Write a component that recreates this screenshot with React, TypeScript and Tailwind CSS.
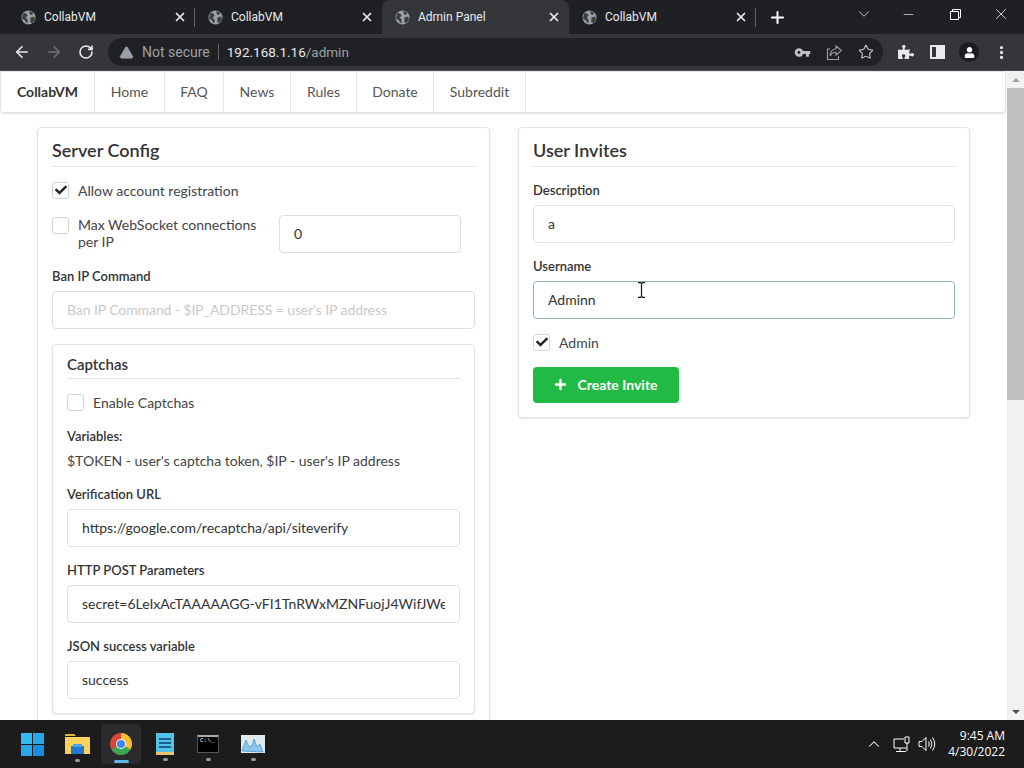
import React from 'react';
import { ArrowLeft, ArrowRight, RotateCw, Star, X, Plus, ChevronDown, ChevronUp, Minus, TriangleAlert, MoreVertical } from 'lucide-react';
import { FaCheck, FaPuzzlePiece, FaUser, FaPlus } from 'react-icons/fa';
import { MdVpnKey } from 'react-icons/md';

const Globe = () => (
  <svg width="15" height="15" viewBox="0 0 16 16" className="shrink-0">
    <circle cx="8" cy="8" r="7.5" fill="#9aa0a6" />
    <path d="M3 3l3 1 1 2-2 2 2 2v3l-1 1-2-3-3-2 1-4zM9 1l4 2-1 2-2 0-1-2zM10 8l4-1 1 3-3 4-2-1z" fill="#3c4043" />
  </svg>
);

const Tab = ({ title, active, sep }: { title: string; active?: boolean; sep?: boolean }) => (
  <div className={`relative flex items-center w-[187px] h-[34px] pl-[13px] pr-[8px] text-[12px] text-[#e8eaed] ${active ? 'bg-[#35363a] rounded-t-lg' : ''}`}>
    <Globe />
    <span className="ml-[8px] flex-1">{title}</span>
    <X size={14} strokeWidth={3} className="text-[#e8eaed]" />
    {sep && <div className="absolute right-0 top-[8px] h-[19px] w-px bg-[#5f6368]" />}
  </div>
);

const Check = ({ on, className }: { on?: boolean; className?: string }) => (
  <div className={`w-[17px] h-[17px] shrink-0 rounded-[3px] border border-[#d4d4d5] bg-white flex items-center justify-center ${className ?? ''}`}>
    {on && <FaCheck size={12} className="text-[#222]" />}
  </div>
);

const Field = ({ label, value, mb }: { label: string; value: string; mb?: string }) => (
  <div className={mb}>
    <div className="text-[13px] font-semibold text-[#333] h-[19px] leading-[19px] mb-[5px]">{label}</div>
    <div className="h-[38px] border border-[#dededf] rounded-[4px] px-[14px] pb-[2px] flex items-center text-[14px] text-[#333]">
      <div className="overflow-hidden whitespace-nowrap">{value}</div>
    </div>
  </div>
);

const navItems = [
  { t: 'Home', w: 'w-[70px]' },
  { t: 'FAQ', w: 'w-[59px]' },
  { t: 'News', w: 'w-[67px]' },
  { t: 'Rules', w: 'w-[66px]' },
  { t: 'Donate', w: 'w-[77px]' },
  { t: 'Subreddit', w: 'w-[92px]' },
];

const App: React.FC = () => {
  return (
    <div className="w-[1024px] h-[768px] flex flex-col overflow-hidden bg-white font-['Lato',sans-serif]">
      {/* chrome tabs */}
      <div className="h-[34px] bg-[#1f2024] flex items-center pl-[8px] font-['Roboto',sans-serif] shrink-0">
        <Tab title="CollabVM" sep />
        <Tab title="CollabVM" />
        <Tab title="Admin Panel" active />
        <Tab title="CollabVM" sep />
        <Plus size={19} strokeWidth={2.5} className="text-white ml-[12px]" />
        <div className="flex-1" />
        <ChevronDown size={18} strokeWidth={1.2} className="text-[#d5d5d5] mr-[28px] -mt-[6px]" />
        <Minus size={15} strokeWidth={1} className="text-white mr-[34px] -mt-[6px]" />
        <svg width="11" height="11" viewBox="0 0 11 11" fill="none" stroke="#fff" strokeWidth="1" className="mr-[31px] -mt-[6px]">
          <path d="M.5 2.5h8v8h-8zM2.5 2.5v-2h8v8h-2" />
        </svg>
        <X size={18} strokeWidth={1} className="text-white mr-[14px] -mt-[6px]" />
      </div>

      {/* chrome toolbar */}
      <div className="h-[37px] bg-[#35363a] border-b border-[#4a4b4f] flex items-center pl-[13px] pr-0 shrink-0 font-['Roboto',sans-serif]">
        <ArrowLeft size={18} strokeWidth={2.2} className="text-[#e8eaed]" />
        <ArrowRight size={18} strokeWidth={2.2} className="text-[#6f7276] ml-[14px]" />
        <RotateCw size={16} strokeWidth={2.4} className="text-[#e8eaed] ml-[15px]" />
        <div className="ml-[14px] w-[775px] h-[28px] rounded-full bg-[#202124] flex items-center pl-[11px] text-[14px]">
          <TriangleAlert size={15} fill="#9aa0a6" strokeWidth={1} className="text-[#9aa0a6]" />
          <span className="text-[#9aa0a6] ml-[8px]">Not secure</span>
          <span className="w-px h-[16px] bg-[#5f6368] mx-[8px]" />
          <span className="text-[#e8eaed] text-[13.500px]">192.168.1.16</span>
          <span className="text-[#9aa0a6] text-[13.500px]">/admin</span>
          <div className="flex-1" />
          <MdVpnKey size={17} className="text-[#bdc1c6] mr-[15px]" />
          <svg width="17" height="17" viewBox="0 0 17 17" fill="none" stroke="#9aa0a6" strokeWidth="1.1" className="mr-[15px]">
            <path d="M4 5H1.5v10.5h11V12" />
            <path d="M10 2l5.5 4.5L10 11V8.3C7.5 8.3 5.5 9.5 4 12c.3-4 2.5-7 6-7.300z" />
          </svg>
          <Star size={16} strokeWidth={1.6} className="text-[#c8cbd0] mr-[9px]" />
        </div>
        <FaPuzzlePiece size={16} className="text-[#e8eaed] ml-[15px]" />
        <div className="ml-[16px] w-[15px] h-[14px] border-2 border-[#e8eaed] flex justify-end">
          <div className="w-[7px] bg-[#e8eaed]" />
        </div>
        <div className="ml-[14px] w-[20px] h-[20px] rounded-full bg-[#1b1c1f] flex items-center justify-center">
          <FaUser size={11} className="text-white" />
        </div>
        <MoreVertical size={17} strokeWidth={2.6} className="text-[#e8eaed] ml-[14px]" />
      </div>

      {/* page */}
      <div className="flex-1 flex min-h-0">
        <div className="relative flex-1 min-w-0 overflow-hidden">
          <div className="h-[42px] border border-[#e3e3e4] rounded-b-[4px] shadow-[0_1px_2px_rgba(34,36,38,0.15)] flex text-[14px] text-[#555] w-[1006px]">
            <div className="w-[94px] pb-[2px] flex items-center justify-center border-r border-[#e8e8e9] font-bold text-[#333]">CollabVM</div>
            {navItems.map((n) => (
              <div key={n.t} className={`${n.w} pb-[2px] flex items-center justify-center border-r border-[#e8e8e9]`}>{n.t}</div>
            ))}
          </div>

          <div className="flex items-start pl-[37px] pt-[14px] gap-[28px]">
            {/* server config */}
            <div className="w-[453px] border border-[#e3e3e4] rounded-[4px] shadow-[0_1px_2px_rgba(34,36,38,0.12)] px-[14px] pt-[11px] pb-[20px] shrink-0">
              <div className="text-[18px] font-semibold text-[#333] h-[28px] leading-[22px] border-b border-[#e3e3e4]">Server Config</div>
              <div className="flex items-center gap-[9px] mt-[14px] text-[14px] text-[#444] h-[18px]">
                <Check on />
                <span>Allow account registration</span>
              </div>
              <div className="flex mt-[16px] h-[38px]">
                <Check className="mt-[2px]" />
                <div className="ml-[9px] w-[201px] text-[14px] leading-[17px] text-[#444] mt-[1px]">Max WebSocket connections per IP</div>
                <div className="w-[182px] h-[38px] border border-[#dededf] rounded-[4px] px-[14px] pb-[2px] flex items-center text-[14px] text-[#333]">0</div>
              </div>
              <div className="mt-[14px]">
                <div className="text-[13px] font-semibold text-[#333] h-[19px] leading-[19px] mb-[5px]">Ban IP Command</div>
                <div className="h-[38px] border border-[#dededf] rounded-[4px] px-[14px] pb-[2px] flex items-center text-[14px] tracking-[-0.09px] text-[#c9c9c9]">Ban IP Command - $IP_ADDRESS = user's IP address</div>
              </div>

              {/* captchas */}
              <div className="mt-[15px] border border-[#e3e3e4] rounded-[4px] shadow-[0_1px_2px_rgba(34,36,38,0.12)] px-[14px] pt-[9px] pb-[14px]">
                <div className="text-[15px] font-semibold text-[#333] h-[25px] leading-[20px] border-b border-[#e3e3e4]">Captchas</div>
                <div className="flex items-center gap-[9px] mt-[14px] text-[14px] text-[#444] h-[18px]">
                  <Check />
                  <span>Enable Captchas</span>
                </div>
                <div className="text-[13px] font-semibold text-[#333] mt-[16px] h-[19px] leading-[19px]">Variables:</div>
                <div className="text-[14px] text-[#444] mt-[5px] h-[19px] leading-[19px]">$TOKEN - user's captcha token, $IP - user's IP address</div>
                <Field label="Verification URL" value="https://google.com/recaptcha/api/siteverify" mb="mt-[15px]" />
                <Field label="HTTP POST Parameters" value="secret=6LeIxAcTAAAAAGG-vFI1TnRWxMZNFuojJ4WifJWe" mb="mt-[14px]" />
                <Field label="JSON success variable" value="success" mb="mt-[14px]" />
              </div>
              <div className="h-[40px]" />
            </div>

            {/* user invites */}
            <div className="w-[452px] h-[291px] border border-[#e3e3e4] rounded-[4px] shadow-[0_1px_2px_rgba(34,36,38,0.12)] px-[14px] pt-[11px] shrink-0">
              <div className="text-[18px] font-semibold text-[#333] h-[28px] leading-[22px] border-b border-[#e3e3e4]">User Invites</div>
              <Field label="Description" value="a" mb="mt-[14px]" />
              <div className="mt-[14px]">
                <div className="text-[13px] font-semibold text-[#333] h-[19px] leading-[19px] mb-[5px]">Username</div>
                <div className="h-[38px] border border-[#8fb5ab] rounded-[4px] px-[14px] pb-[2px] flex items-center text-[14px] text-[#333]">Adminn</div>
              </div>
              <div className="flex items-center gap-[9px] mt-[14px] text-[14px] text-[#444] h-[18px]">
                <Check on />
                <span>Admin</span>
              </div>
              <div className="mt-[16px] w-[146px] h-[36px] pb-[2px] bg-[#21ba45] rounded-[4px] flex items-center justify-center gap-[10px] text-white text-[14px] font-bold">
                <FaPlus size={13} />
                <span>Create Invite</span>
              </div>
            </div>
          </div>

          {/* i-beam mouse pointer */}
          <svg width="9" height="16" viewBox="0 0 9 16" fill="none" stroke="#111" strokeWidth="1.2" className="absolute left-[637px] top-[211px]">
            <path d="M1 .6h2.500l1 1 1-1H8M4.500 1.600v12.800M1 15.400h2.500l1-1 1 1H8" />
          </svg>
        </div>

        {/* scrollbar */}
        <div className="w-[17px] bg-[#f1f1f1] flex flex-col items-center shrink-0">
          <div className="h-[17px] flex items-center justify-center">
            <div className="w-0 h-0 border-x-[4px] border-x-transparent border-b-[4px] border-b-[#a3a3a3]" />
          </div>
          <div className="w-full h-[312px] bg-[#c1c1c1]" />
          <div className="flex-1" />
          <div className="h-[17px] flex items-center justify-center">
            <div className="w-0 h-0 border-x-[4px] border-x-transparent border-t-[4px] border-t-[#505050]" />
          </div>
        </div>
      </div>

      {/* taskbar */}
      <div className="h-[48px] bg-[#1c1c1c] flex items-center shrink-0 pl-[21px] font-['Open_Sans',sans-serif]">
        <svg width="23" height="23" viewBox="0 0 24 24">
          <path d="M0 0h11.500v11.500H0z" fill="#36b9f0" />
          <path d="M12.500 0H24v11.500H12.500z" fill="#2aa5ea" />
          <path d="M0 12.500h11.500V24H0z" fill="#2aa5ea" />
          <path d="M12.500 12.500H24V24H12.500z" fill="#1b8de0" />
        </svg>
        <div className="relative ml-[20px] w-[26px] flex justify-center">
          <svg width="25" height="22" viewBox="0 0 25 22">
            <path d="M0 2a1 1 0 0 1 1-1h8l2 2h-11z" fill="#e2b33d" />
            <path d="M0 4h25v17H0z" fill="#fbd25c" />
            <path d="M6 13h13v8H6z" fill="#1f78d1" />
            <path d="M8 11h9v3H8z" fill="#4aa3e8" />
          </svg>
          <div className="absolute top-[26px] w-[5px] h-[3px] rounded-full bg-[#9a9a9a]" />
        </div>
        <div className="relative ml-[11px] w-[40px] h-[40px] rounded-[4px] bg-[#2b2b2b] flex items-center justify-center">
          <svg width="22" height="22" viewBox="0 0 22 22">
            <circle cx="11" cy="11" r="11" fill="#db4437" />
            <path d="M11 11L20.500 16.500A11 11 0 0 1 6 20.800z" fill="#34a853" />
            <path d="M11 11L11 0A11 11 0 0 1 20.500 16.500z" fill="#fbc02d" />
            <path d="M11 11L1.500 16.500A11 11 0 0 0 6 20.800z" fill="#34a853" />
            <circle cx="11" cy="11" r="5" fill="#fff" />
            <circle cx="11" cy="11" r="4" fill="#4285f4" />
          </svg>
          <div className="absolute bottom-[1px] w-[15px] h-[3px] rounded-full bg-[#5cb8e6]" />
        </div>
        <div className="relative ml-[15px] w-[18px] flex justify-center">
          <svg width="18" height="24" viewBox="0 0 18 24">
            <path d="M0 1h18v21H0z" fill="#4fc3e8" />
            <path d="M0 20h18v3H0z" fill="#e9c46a" />
            <path d="M3 6h12v2H3zM3 10h12v2H3zM3 14h12v2H3z" fill="#1d5f8a" />
          </svg>
          <div className="absolute top-[26px] w-[5px] h-[3px] rounded-full bg-[#9a9a9a]" />
        </div>
        <div className="relative ml-[23px] w-[22px] flex justify-center">
          <div className="w-[22px] h-[18px] bg-black border border-[#555] border-t-2 border-t-[#aaa] text-[6px] leading-[8px] text-white pl-[2px] font-['Liberation_Mono',monospace]">C:\_</div>
          <div className="absolute top-[23px] w-[5px] h-[3px] rounded-full bg-[#9a9a9a]" />
        </div>
        <div className="relative ml-[22px] w-[24px] flex justify-center">
          <svg width="24" height="18" viewBox="0 0 24 18">
            <path d="M0 0h24v18H0z" fill="#dfe9f0" />
            <path d="M1 16L5 5l3 7 3-1 2-7 3 8 3-3 3 8v0z" fill="#8ec5ea" stroke="#3d8fc9" strokeWidth=".7" />
          </svg>
          <div className="absolute top-[23px] w-[5px] h-[3px] rounded-full bg-[#9a9a9a]" />
        </div>
        <div className="flex-1" />
        <ChevronUp size={18} strokeWidth={1.4} className="text-white mr-[10px]" />
        <svg width="17" height="17" viewBox="0 0 17 17" fill="none" stroke="#fff" strokeWidth="1" className="mr-[8px]">
          <path d="M11 3H1v9h13M7 12v3M3 15.500h10" />
          <path d="M12 1h4v6h-4zM14 7v8" />
        </svg>
        <svg width="18" height="16" viewBox="0 0 18 16" fill="none" stroke="#fff" strokeWidth="1" className="mr-[5px]">
          <path d="M1 5.500h3l4-4v13l-4-4H1zM10.500 5.500q1.500 2.500 0 5M12.500 3.500q3 4.500 0 9M14.500 1.500q4.500 6.500 0 13" />
        </svg>
        <div className="w-[64px] mr-[19px] text-right text-[12px] leading-[16px] text-white">
          <div>9:45 AM</div>
          <div>4/30/2022</div>
        </div>
      </div>
    </div>
  );
};

export default App;
